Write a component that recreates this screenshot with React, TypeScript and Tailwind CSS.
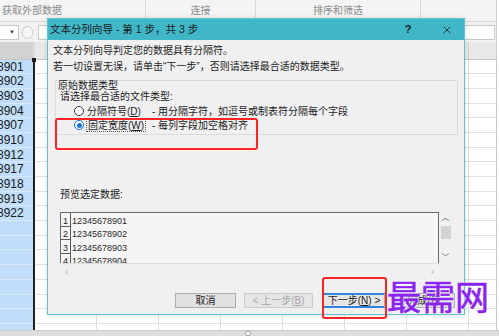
import { X } from "lucide-react";

const colA = [
  "8901", "8902", "8903", "8904", "8907", "8910", "8912", "8917", "8918", "8919", "8922",
  "", "", "", "", "", "", "", "",
];
const gridCols = [0, 1, 2, 3, 4, 5, 6];
const preview = ["12345678901", "12345678902", "12345678903", "12345678904"];

function Radio({ checked }: { checked?: boolean }) {
  return checked ? (
    <span className="flex h-[10px] w-[10px] shrink-0 items-center justify-center rounded-full border border-[#1c72d6] bg-white">
      <span className="h-[5px] w-[5px] rounded-full bg-[#1c72d6]" />
    </span>
  ) : (
    <span className="block h-[10px] w-[10px] shrink-0 rounded-full border border-[#3a3a3a] bg-white" />
  );
}

export default function App() {
  return (
    <div className="relative flex h-[336px] w-[499px] flex-col overflow-hidden bg-white font-['Liberation_Sans','Noto_Sans_CJK_SC',sans-serif]">
      {/* ribbon group captions */}
      <div className="flex h-[22px] w-[497px] shrink-0 border-b border-[#d5d5d5] bg-[#f4f4f4] text-[10px] leading-[21px] text-[#8c8c8c]">
        <div className="w-[146px] shrink-0 border-r border-[#dadada] pl-[2px]">获取外部数据</div>
        <div className="w-[110px] shrink-0 border-r border-[#dadada] text-center">连接</div>
        <div className="w-[165px] shrink-0 border-r border-[#dadada] text-center">排序和筛选</div>
        <div className="flex-1 border-r border-[#cfcfcf]" />
      </div>

      {/* formula bar */}
      <div className="flex h-[20px] w-[497px] shrink-0 items-center gap-[3px] border-r border-[#cfcfcf] bg-[#f2f2f2] pr-[1px]">
        <div className="flex h-[15px] w-[19px] items-center justify-end border border-l-0 border-[#c8c8c8] bg-white pr-[3px] text-[6px] text-[#444]">
          ▼
        </div>
        <div className="h-[13px] w-[11px] rounded-full border border-[#cdcdcd] bg-[#f7f7f7]" />
        <div className="ml-[2px] h-[15px] flex-1 border border-[#c8c8c8] bg-white" />
      </div>

      {/* column headers */}
      <div className="flex h-[17.5px] w-[497px] shrink-0 border-b border-[#c6c6c6] bg-[#e8e8e8]">
        <div className="w-[33px] shrink-0 bg-[#d3d3d3]" />
        <div className="w-[2px] shrink-0 bg-[#dcdcdc]" />
        {gridCols.map((c) => (
          <div key={c} className="w-[62px] shrink-0 border-r border-[#d2d2d2]" />
        ))}
        <div className="flex-1 border-r border-[#cfcfcf]" />
      </div>

      {/* cells */}
      <div className="flex min-h-0 flex-1 flex-col overflow-hidden">
        {colA.map((v, i) => (
          <div key={i} className="flex h-[14.7px] w-[497px] shrink-0">
            <div className="w-[33px] shrink-0 overflow-hidden whitespace-nowrap border-b border-[#d9e9f8] bg-[#c0ddf9] text-[12px] leading-[14px] text-[#1a1a1a]">
              <span className="ml-[-3px]">{v}</span>
            </div>
            <div className="w-[2px] shrink-0 bg-[#1f1f1f]" />
            {gridCols.map((c) => (
              <div key={c} className="w-[62px] shrink-0 border-b border-r border-[#e0e0e0]" />
            ))}
            <div className="flex-1 border-b border-r border-[#e0e0e0] border-r-[#c8c8c8]" />
          </div>
        ))}
      </div>

      {/* bottom scroll strip */}
      <div className="flex h-[6px] shrink-0 items-start border-t border-[#c9c9c9] bg-[#dedede] pl-[245px]">
        <div className="h-[5px] w-[6px] rounded-full border border-[#999] bg-white" />
      </div>

      {/* selection handle */}
      <div className="absolute left-[32px] top-[58px] h-[4px] w-[4px] bg-[#1f1f1f]" />

      {/* dialog */}
      <div className="absolute left-[47px] top-[18px] flex h-[297px] w-[418px] flex-col border border-[#5fc2ce] bg-[#f0f0f0] text-[10px] text-[#1c1c1c] shadow-[0_0_5px_rgba(0,0,0,0.12)]">
        <div className="flex h-[21px] shrink-0 items-center bg-[#41b6c6] pl-[2px] text-[10.5px] text-[#1a1a1a]">
          <span>文本分列向导 - 第 1 步，共 3 步</span>
          <span className="ml-auto w-[12px] text-center text-[11px] font-bold">?</span>
          <span className="ml-[26px] mr-[10px] flex w-[14px] justify-center">
            <X size={12} strokeWidth={1.6} />
          </span>
        </div>

        <div className="flex flex-1 flex-col pl-[5px]">
          <p className="mt-[3px] leading-[16px]">文本分列向导判定您的数据具有分隔符。</p>
          <p className="leading-[16px]">若一切设置无误，请单击“下一步”，否则请选择最合适的数据类型。</p>

          {/* original data type group */}
          <div className="ml-[2px] mt-[5px] flex h-[55px] w-[403px] flex-col border border-[#dadada]">
            <div className="pl-[2px] leading-[10px]">原始数据类型</div>
            <div className="pl-[4px] leading-[12px]">请选择最合适的文件类型:</div>
            <div className="mt-[1px] flex h-[14px] items-center">
              <span className="ml-[18px]">
                <Radio />
              </span>
              <span className="ml-[3px] w-[65px] shrink-0">
                分隔符号(<span className="underline">D</span>)
              </span>
              <span>- 用分隔字符，如逗号或制表符分隔每个字段</span>
            </div>
            <div className="flex h-[14px] items-center">
              <span className="ml-[18px]">
                <Radio checked />
              </span>
              <span className="ml-[2px] w-[66px] shrink-0">
                <span className="border border-dotted border-[#555] px-[1px] leading-[11px]">
                  固定宽度(<span className="underline">W</span>)
                </span>
              </span>
              <span>- 每列字段加空格对齐</span>
            </div>
          </div>

          <div className="ml-[7px] mt-[54px] leading-[12px]">预览选定数据:</div>

          {/* preview */}
          <div className="ml-[7px] mt-[11px] flex h-[67px] w-[392px] flex-col">
            <div className="flex h-[51px] shrink-0">
              <div className="flex w-[379px] flex-col overflow-hidden border-l border-r border-t border-[#6a6a6a] bg-[#f5f5f5] text-[9px]">
                {preview.map((p, i) => (
                  <div key={p} className="flex h-[13.5px] shrink-0 items-end">
                    <span className="flex h-full w-[10px] shrink-0 items-end justify-center border-b border-r border-[#5a5a5a] leading-[10px]">
                      {i + 1}
                    </span>
                    <span className="pl-[1px] leading-[11px] text-[#2a2a2a]">{p}</span>
                  </div>
                ))}
              </div>
              <div className="flex flex-1 flex-col items-center text-[8px] text-[#555]">
                <span className="mt-[1px] leading-[10px]">︿</span>
                <span className="mt-[3px] h-[13px] w-[10px] bg-[#d3d3d3]" />
                <span className="mt-auto leading-[10px]">﹀</span>
              </div>
            </div>
            <div className="flex h-[16px] w-[379px] items-center justify-between border-t border-[#dcdcdc] px-[5px] text-[10px] text-[#b0b0b0]">
              <span>‹</span>
              <span>›</span>
            </div>
          </div>

          {/* buttons */}
          <div className="mb-[6px] mr-[9px] mt-auto flex h-[15px] justify-end text-[10px] leading-[13px]">
            <div className="w-[61px] border border-[#adadad] bg-[#e1e1e1] text-center">取消</div>
            <div className="ml-[8px] w-[69px] border border-[#cccccc] bg-[#e6e6e6] text-center text-[#a6a6a6]">
              &lt; 上一步(<span className="underline">B</span>)
            </div>
            <div className="ml-[10px] w-[62px] border-x border-y-2 border-x-[#adadad] border-y-[#2d84d8] bg-[#e5e5e5] text-center leading-[11px]">
              下一步(<span className="underline">N</span>) &gt;
            </div>
            <div className="ml-[8px] w-[62px] border border-[#adadad] bg-[#e1e1e1] text-center">
              完成(<span className="underline">F</span>)
            </div>
          </div>
        </div>
      </div>

      {/* annotation boxes */}
      <div className="absolute left-[55px] top-[118px] h-[32px] w-[203px] rounded-[3px] border-2 border-[#ff2424]" />
      <div className="absolute left-[322px] top-[277px] h-[42px] w-[65px] rounded-[3px] border-2 border-[#ff2424]" />

      {/* watermark */}
      <div className="absolute left-[387px] top-[281px] text-[34px] leading-none text-[#8a22f0] [-webkit-text-stroke:0.6px_#8a22f0] [text-shadow:0_0_2px_#fff,0_0_2px_#fff]">
        最需网
      </div>
    </div>
  );
}
